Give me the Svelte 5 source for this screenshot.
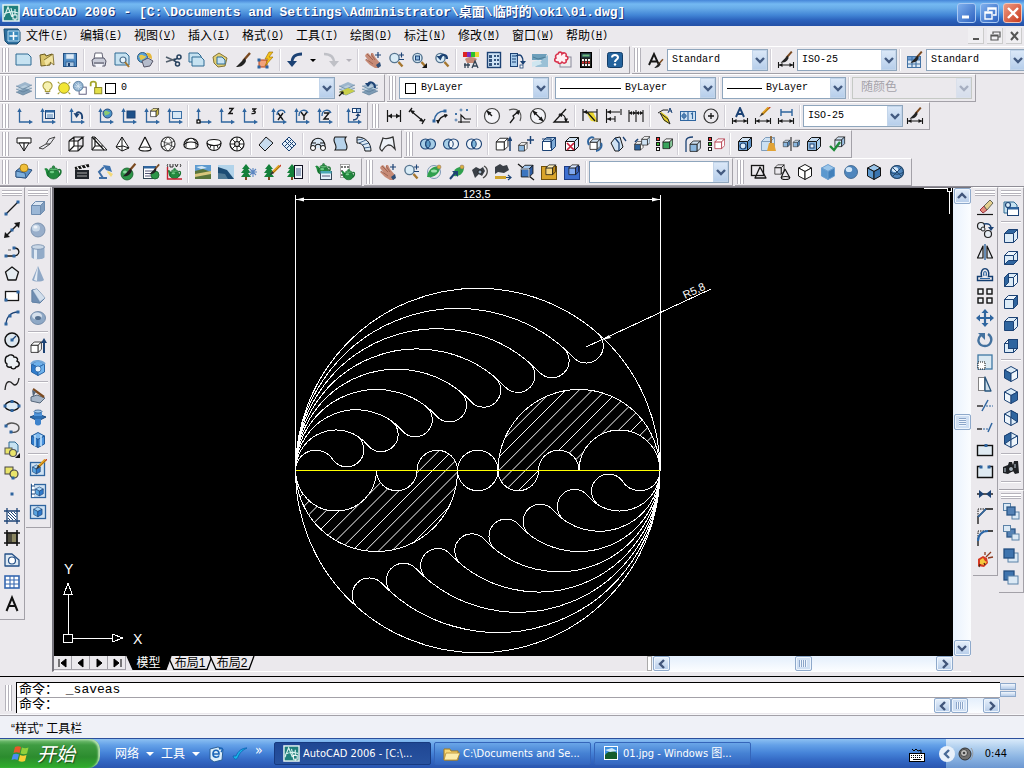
<script>
  const NAVY = '#1c4274', BLUE = '#2f659f', PALE = '#cfe2f3', INK = '#161616';
  const L = (d, s = INK, w = 1.2, f = 'none') => `<path d="${d}" fill="${f}" stroke="${s}" stroke-width="${w}"/>`;
  const F = (d, f = INK) => `<path d="${d}" fill="${f}"/>`;
  const P = (pts, f, s = INK, w = 1) => `<polygon points="${pts}" fill="${f}" stroke="${s}" stroke-width="${w}" stroke-linejoin="round"/>`;
  const C = (x, y, r, f = 'none', s = INK, w = 1.2) => `<circle cx="${x}" cy="${y}" r="${r}" fill="${f}" stroke="${s}" stroke-width="${w}"/>`;
  const E = (x, y, a, b, f = 'none', s = INK, w = 1.2) => `<ellipse cx="${x}" cy="${y}" rx="${a}" ry="${b}" fill="${f}" stroke="${s}" stroke-width="${w}"/>`;
  const R = (x, y, w, h, f = 'none', s = INK, sw = 1) => `<rect x="${x}" y="${y}" width="${w}" height="${h}" fill="${f}" stroke="${s}" stroke-width="${sw}"/>`;
  const dots = (...p) => p.map(([x, y]) => R(x - 1, y - 1, 2, 2, BLUE, BLUE)).join('');
  const mark = (inner, x, y, k) => `<g transform="translate(${x} ${y}) scale(${k})">${inner}</g>`;

  const cube = (f = PALE, t = PALE, s = PALE, k = INK) =>
    P('2.5,6.5 11.5,6.5 11.5,15.5 2.5,15.5', f, k) + P('2.5,6.5 6.5,2.5 15.5,2.5 11.5,6.5', t, k) + P('11.5,6.5 15.5,2.5 15.5,11.5 11.5,15.5', s, k);
  const hex = (t, l, r, k = INK) =>
    P('9,1.5 15.5,5 9,8.5 2.5,5', t, k) + P('2.5,5 9,8.5 9,16.5 2.5,13', l, k) + P('15.5,5 9,8.5 9,16.5 15.5,13', r, k);
  const sheet = (x = 2, y = 3, w = 13, h = 11) => P(`${x},${y} ${x + w - 3},${y} ${x + w},${y + 3} ${x + w},${y + h} ${x},${y + h}`, '#c6e2f1', '#2f6a93');
  const brush = L('M16 2 9 10', '#7b4a20', 2.4) + F('M11 7 2 16c4 0 8-1 10-6z', '#222');
  const pencil = L('M15 3 7 11', '#e0a020', 3) + L('M16 3 8 11', '#8c5207', .8) + F('M7 9 4 14l5-3z', '#333') + L('M15.5 2.5l1 1', '#c63b2a', 2.5);
  const bolt = F('M12 1 8 8h3l-3 7 8-9h-4l4-5z', '#f4c21b') + L('M12 1 8 8h3l-3 7 8-9h-4l4-5z', '#9b6a00', .6);
  const teapot = L('M14 7c4-2 4 5-1 6', '#1b7533', 1.6) + F('M5 14C1 13 3 7 0 6l2-1c3 1 3 4 5 4z', '#1f8a3c') + E(9.5, 11, 5.8, 5, '#23893f', '#105a26', .7) + E(9.5, 6.3, 4, 1.5, '#5cb873', '#14602a', .7) + C(9.5, 4, 1.2, '#2f9b4b', '#14602a', .6) + E(8, 9, 2.2, 1.3, '#6fcb85', 'none', 0);
  const axes = L('M4.5 3v12H16', BLUE, 1.3) + F('M2.3 5 4.5 1l2.2 4zM14 12.800l4 2.200-4 2.200z', BLUE);
  const lens = L('M11.5 11l4 4.5', '#a5762e', 2.4) + C(7.5, 7, 4.6, '#d9ecf7', '#55748f', 1.4);
  const hand = F('M2 3l2-1 3 3 0-3 2 0 2 4 5 6-1 5-4 0-5-3-5-5 1-1 3 2-4-5z', '#c68a76') + L('M3 3l6 6M7 3l4 6M2 8l7 5', '#8d5545', .7) + F('M12 14l4-3 1 4-3 2z', '#2f4f78');
  const cross = (x, y) => L(`M${x - 3} ${y}h6M${x} ${y - 3}v6`, NAVY, 1.2);
  const layers = F('M1 7l9-4 7 3-9 4z', '#9db6cc') + F('M1 10l9-4 7 3-9 4z', '#b8cddd') + F('M1 13l9-4 7 3-9 4z', '#7e9cb5') + L('M1 7l7 3 9-4M1 10l7 3 9-4M1 13l7 3 9-4', '#5b7b96', .7);
  const dim = L('M2.5 3v12M15.5 3v12M2 9h14', INK, 1.2) + F('M3 9l4-2.400v4.800zM15 9l-4-2.400v4.800z');
  const dimLow = L('M1.5 11v6M16.5 11v6M2 14h14', INK, 1.1) + F('M2 14l3.500-2v4zM16 14l-3.500-2v4z');
  const tree = F('M6 1l4 5H8l3 4H8l3 4H1l3-4H1l3-4H2z', '#14803a') + L('M6 14v3', '#7b4a20', 2);
  const rings = (a, b, m) => C(6.5, 9, 5, a, NAVY, 1.1) + C(11.5, 9, 5, b, NAVY, 1.1) + `<path d="M9 4.800a5 5 0 0 1 0 8.400a5 5 0 0 1 0-8.400" fill="${m}" stroke="${NAVY}"/>`;
  const ball = C(9, 9, 6.5, '#4f86bd', '#345d87', .8) + E(7, 6.5, 3.2, 2.6, '#d3e7f8', 'none', 0);
  const steel = '#8fa9c6';

  const icon = {
    new: sheet(1, 3, 15, 11),
    open: P('2,4 7,3 8,5 14,3 12,14 3,15', '#d9c36a', '#6a5a20') + F('M6 9l9-6 1 11-4-3-4 4z', '#f2e3a0') + L('M6 9l9-6 1 11-4-3', '#71601f', .8),
    save: R(2.5, 2.5, 13, 13, '#4f8bc4', '#234f80') + R(5, 3, 8, 5, '#dceaf6', '#7aa2c8', .6) + R(5, 11, 8, 4.5, '#a9c6e1', '#234f80', .7) + F('M7 12h2v3H7z', NAVY),
    print: P('5,2 12,2 13,8 4,8', '#fff', '#667') + P('2,9 5,7 14,7 16,10 15,15 3,15', '#c9ccd8', '#556') + L('M4 12h10', '#445', 1) + F('M5 13h8l-1 3H6z', '#f5f5fa'),
    preview: sheet(2, 2, 14, 12) + C(10, 9, 3, '#e8f4fb', '#4c6e8c', 1.2) + L('M12 11l4 5', '#a5762e', 2),
    publish: C(6.5, 6.5, 5, '#5aa2d8', '#2d5b80', 1) + F('M3 5c3-3 4 0 7 0-1 4-4 2-5 5z', '#e5c84a') + P('6,10 12,7 17,10 14,15 8,16', '#b5bccb', '#556') + F('M10 2c5-1 6 3 6 6l-3-1z', '#e5b83c'),
    cut: L('M1 6l9 4M1 11l9-3', '#53606e', 1.6) + C(14, 6, 2, 'none', '#26415e', 1.5) + C(12.5, 13, 2, 'none', '#26415e', 1.5) + L('M9 9l4-2M9 9.5l3 2', '#26415e', 1.5),
    copy: sheet(1, 2, 12, 9) + sheet(4, 6, 12, 9),
    paste: P('2,6 8,2 16,7 14,15 7,16 3,12', '#e2cf73', '#857436') + sheet(6, 6, 8, 7),
    brush,
    block: P('2,9 10,9 10,16 2,16', '#f2a27a', '#b3431c') + dots([2, 9], [10, 16], [2, 16]) + bolt,
    undo: L('M16 3C8 3 6 7 6 12', NAVY, 2.8) + F('M1 10h10l-5 6z', NAVY),
    redo: L('M2 3c8 0 10 4 10 9', '#bfc0c6', 2.4) + F('M7 10h10l-5 6z', '#bfc0c6'),
    pan: hand + cross(14, 4),
    zoom: lens + L('M12 4h5M14.5 1.500v5M12 8.500h5', NAVY, 1.1),
    zoomwin: lens + R(5.5, 5, 4, 4, '#8db8df', NAVY) + F('M17 12v5h-5z'),
    zoomprev: lens + L('M14 8C14 3 9 3 7 6', NAVY, 2.2) + F('M3.500 5l6 0-2 4.500z', NAVY),
    props: F('M1 1h4v5H1z', '#d22') + F('M5 1h4v5H5z', '#7a2fc0') + F('M9 1h4v5H9z', '#2ac22a') + F('M13 1h4v5h-4z', '#e9d531') + F('M3 8c4-3 9-2 12 0l-3 4H5z', '#c68a76') + L('M10 17l3-7 3 7M11 15h4M2 14h6M3 12v5M6 12v5', '#345', 1.3),
    design: R(2.5, 1.5, 13, 15, '#cfe3f5', NAVY, 1.4) + F('M4 4h3v3H4zM4 8h3v3H4zM4 12h3v3H4zM9 4h2v2H9zM12 4h2v2h-2zM9 8h2v2H9zM12 8h2v2h-2zM9 12h2v2H9zM12 12h2v2h-2z', '#34557e'),
    palette: R(2.5, 2.5, 7, 13, '#a9cdec', NAVY) + L('M4 5h4M4 8h4M4 11h4', NAVY) + L('M8 5c5-3 7 1 7 6', NAVY, 1.4) + F('M12 10h6l-3 4z', NAVY) + R(12, 14, 3, 3, '#fff', NAVY, .8),
    sheets: F('M1 3h15l-3 6H1z', '#6d9fbb') + F('M17 4v12H4l8-8z', '#9ac0d6') + F('M1 11l7-2 3 4-10 3z', '#cfe6f0') + L('M2 6l5 2 8-2', '#44758f', .8),
    markup: R(6, 6, 11, 10, '#eee', '#889') + L('M4 3c1-3 4-2 4 0 2-2 5-1 4 2 3 1 2 4 0 4 1 3-2 4-4 2-1 2-4 2-4 0-4 0-4-3-2-4-1-2 0-4 2-4z', '#d8324c', 1.6, '#fff0f2'),
    calc: R(3.500, 1.500, 11, 15, '#20231f', '#000') + R(5, 3, 8, 3, '#6fba7c', '#245') + F('M5 8h2v2H5zM8 8h2v2H8zM11 8h2v2h-2zM5 13h2v2H5zM8 13h2v2H8zM11 13h2v2h-2z', '#f2f2f2') + F('M5 10.500h2v2H5zM8 10.500h2v2H8zM11 10.500h2v2h-2z', '#d33'),
    help: `<rect x="1.500" y="1.500" width="15" height="15" rx="2" fill="#24639d" stroke="#143e68"/>` + L('M6 6.500C6 3 12 3 12 6.500c0 2-3 2-3 4.500', '#fff', 2) + C(9, 13.500, 1.200, '#fff', 'none', 0),
    textstyle: L('M2 14 7 3l5 11M4 10.500h6', INK, 1.900) + mark(brush, 6, 7, .62),
    dimstyle: dimLow + mark(brush, 2, -1, .8),
    tablestyle: R(1.500, 5.500, 13, 11, '#dbe8f5', '#4373a5') + F('M2 6h12v3H2z', '#6d9bd0') + L('M2 9h12M2 13h12M6 6v10M10 6v10', '#4373a5') + mark(brush, 3, -1, .8),
    layers,
    layercur: layers + F('M1 13l9-4 7 3-9 4z', '#c9cf4a') + L('M1 17l4-4', INK, 1.3) + F('M2 12.500h3.500V16z'),
    layerprev: layers + L('M14 9C14 3 9 2 7 5', NAVY, 2) + F('M4 4h6l-3 4z', NAVY),
    bulb: L('M6 11c-5-4-2-9 2.500-9s7.500 5 2.500 9v2H6z', '#a79a35', 1.200, '#f6f1b0') + L('M6.500 15h4', '#777', 1.600),
    sun: C(9, 9, 6, '#f2e634', '#8f8a1c', 1) + L('M2 2l2 2M16 2l-2 2M2 16l2-2M16 16l-2-2', '#a39d2b', 1.200),
    freeze: R(8, 8, 8, 8, '#fff', '#557') + C(7, 7, 5.500, '#8fb1cf', '#5b7e9f', 1) + L('M3 7h8M7 3v8M4 4l6 6M10 4l-6 6', '#dbe9f4', .9),
    lock: L('M3 7V4c0-3 6-3 6 0v6', '#a5a52c', 2) + R(7.500, 8.500, 8, 7, '#e3e04a', '#84801f'),
    ucs: axes,
    ucsface: axes + R(7.500, 3.500, 9, 8, '#e7f1fa', NAVY) + F('M7.500 3h9v2.500h-9z', BLUE) + L('M9 8h6M9 10h6', BLUE, .8),
    ucsprev: axes + L('M15 12C16 5 11 4 9 7', NAVY, 1.900) + F('M6.500 6l6 1-3 4z', NAVY),
    ucsworld: axes + C(11.500, 6.500, 4.500, '#4b93c7', NAVY, .9) + F('M8 5c2-3 4 0 6 0-1 4-4 2-5 4z', '#8dcb70'),
    ucsobj: axes + R(8, 4, 8, 7, '#1d5089', NAVY),
    ucsfc: axes + mark(cube('#fff', '#f0e48a', '#c9b846'), 7, 0, .62),
    ucsview: axes + R(7.500, 4.500, 9, 7, '#d6e7f5', '#3b6fa5'),
    ucsorigin: axes + R(3, 13, 3, 3, '#fff', '#000', 1.200),
    ucsz: axes + L('M12 1.500h4l-4 5h4', INK, 1.400),
    ucs3: axes + L('M12 2h3.500l-2 2c3 0 2 3.500-2 2.500', INK, 1.300),
    ucsx: axes + L('M9 6l5 7M14 6l-5 7', INK, 1.400) + L('M8 8c0-6 7-6 8-2', BLUE, 1.300),
    ucsy: axes + L('M9 5l3 4 3-4M12 9v4', INK, 1.400) + L('M7 9c0-7 7-7 9-3', BLUE, 1.300),
    ucszr: axes + L('M9 6h5l-5 6h5', INK, 1.400) + L('M7 9c0-7 7-7 9-3', BLUE, 1.300),
    ucsapply: axes + R(8.500, 1.500, 4, 4, '#fff', NAVY) + R(12.500, 1.500, 4, 4, '#9cc1e5', NAVY) + L('M9 13c3 0 5-1 5-5', NAVY, 1.400) + F('M11.500 9h5L14 6z', NAVY),
    dimlin: dim,
    dimalign: L('M4 1l-3 4M17 12l-3 5M3 4l12 10', INK, 1.300) + F('M2 3l5 1-2.500 3zM16 15l-5-1 2.500-3z'),
    dimarc: L('M3 14C4 7 8 4 14 4', BLUE, 1.500) + L('M7 16c1-5 4-7 9-8', INK, 1.300) + dots([3, 14], [14, 4]) + F('M17 8l-4-1 1 4zM7 17l-2-4 4 0z'),
    dimord: L('M7 16V8l4 4h6M4 15h12', INK, 1.200) + L('M1 6l2 2M3 6l-2 2M12 2l2 2M14 2l-2 2', BLUE, .9) + C(2, 13, 1, 'none', BLUE, .8) + C(7, 3, 1, 'none', BLUE, .8),
    dimrad: C(9, 9, 7.500, '#f4f4f8', '#444') + L('M4 4l5 5', INK, 1.400) + F('M3.500 3.500l5 2-3 3z'),
    dimjog: L('M3 3C12 0 17 6 14 14', '#555', 1.200) + L('M4 16l4-5-1-2 6-5', INK, 1.300) + F('M14 3l-1.500 5-3-3z'),
    dimdia: C(9, 9, 7.500, '#f4f4f8', '#444') + L('M4 4l10 10', INK, 1.200) + F('M3.500 3.500l5 2-3 3zM14.500 14.500l-5-2 3-3z'),
    dimang: L('M14 2 2 15h15', INK, 1.300) + L('M7 7c5 0 7 3 7 8', INK, 1.200) + F('M14 15.500l-2-4h4zM6 8l4-2v4z'),
    dimquick: F('M5 5l5 9 7 1-5-10z', '#e9d62d') + L('M2 2v12M16 2v13M2 5h14M6 5l8 9', INK, 1.200) + F('M2 5l4-2v4z'),
    dimbase: L('M2.500 2v14M2 5h14M2 12h9M11 9v6M17 2v6', INK, 1.100) + F('M3 5l4-2v4zM3 12l4-2v4z'),
    dimcont: L('M2 3v12M9 3v12M16 3v12M2 6h14', INK, 1.100) + F('M2 6l3-2v4zM9 6l-3-2v4zM9 6l3-2v4zM16 6l-3-2v4z'),
    qleader: F('M4 4l8 6 2 7-6-3z', '#e3cf2a') + L('M2 6l5-3h5M4 6l8 6 2 5-6-4z', '#222', 1) + L('M12 6l2-5 2 5M13 4h3', NAVY, 1),
    tolerance: R(1.500, 4.500, 15, 9, '#cfe2f3', '#2f659f') + L('M9 5v9', BLUE) + C(5, 9, 2, 'none', BLUE, 1) + L('M5 5.500v7M2.500 9h5M12 7l1.500-1v6', BLUE, 1.100),
    centermark: C(9, 9, 7, 'none', '#333', 1.200) + L('M9 6v6M6 9h6', INK, 1.300),
    dimedit: L('M5 10 9 1l4 9M6.500 7h5', NAVY, 1.900) + dimLow,
    dimtedit: dimLow + mark(pencil, 2, -2, .85),
    dimupdate: L('M4 2v7M15 2v7M4 5h11', BLUE, 1.400) + dimLow,
    solid2d: P('2,3 16,3 16,8 2,8', '#fff') + P('4,8 14,8 9,16', '#fff') + L('M9 8v8'),
    face3d: P('1,13 8,9 11,4 17,2 12,9 5,14', '#e8e8ee', '#444') + L('M8 9l4 0', '#444'),
    box: P('2,6 11,6 11,16 2,16', '#fff') + L('M2 6l5-4h9l-5 4M16 2v9l-5 5M7 2v9h9M7 11l-5 5'),
    wedge: P('2,2 5,2 17,15 2,15', '#fff') + L('M2 2l12 13M5 2v9l-3 4M5 11h8'),
    pyramid: P('9,2 16,13 9,16 3,12', '#fff') + L('M9 2v14M3 12l7-1 6 2', INK, 1),
    cone: F('M9 2 3 14h12z', '#fff') + L('M9 2 3 14M9 2l6 12') + E(9, 14, 6, 2, '#fff'),
    sphere: C(9, 9, 7, '#fff', '#333') + L('M9 2c-5 4-5 10 0 14M9 2c5 4 5 10 0 14M3 6c5 3 8 3 12 0M3 12l6-3 6 3', '#333', .9),
    dome: L('M2 10c0-9 14-9 14 0', INK, 1.200, '#fff') + E(9, 10.500, 7, 3.500, '#fff') + L('M7 4c-3 2-3 5-3 8M11 4c3 2 3 5 3 8', INK, .9),
    dish: L('M2 8c0 10 14 10 14 0', INK, 1.200, '#fff') + E(9, 7.500, 7, 3, '#fff') + L('M6 10l-1 3M12 10l1 3M9 11v5', INK, .9),
    torus: C(9, 9, 7, '#fff') + C(9, 9, 2.500, '#ddd') + L('M9 2v4M9 12v4M2 9h4M12 9h4M4 4l3 3M14 4l-3 3M4 14l3-3M14 14l-3-3', INK, .9),
    edge: P('2,10 9,2 16,8 8,16', '#c7dcef'),
    mesh: P('2,9 9,2 16,9 9,16', '#e4f0fa', NAVY) + L('M5 6l7 7M7 4l7 7M12 4l-7 7M14 6l-7 7', NAVY, 1),
    revolved: L('M2 13c-1-13 15-13 14 0M6 13c0-5 6-5 6 0M2 8h5M11 8h5', INK, 1.100, '#d9e7f4') + C(4, 13, 2.500, '#fff', INK, 1) + C(14, 13, 2.500, '#fff', INK, 1),
    tabulated: L('M3 2h11c-4 4 4 8 0 13H3c4-5-4-8 0-13z', INK, 1.100, '#b7d3eb'),
    ruled: L('M2 2c9 0 14 6 14 14l-6 0C9 11 7 8 2 8z', INK, 1, '#dceaf6') + L('M2 5l6-1M4 8l7-3M7 10l7-2M9 13l7-1', NAVY, .8),
    coons: L('M5 3c4 2 6 0 10-1 1 5 1 8 2 12-4-4-4-4-7-4-3 1-4 3-6 6-3-2-3-2 1-13z', '#333', 1.300, '#eef2f8'),
    union: rings('#a6cde6', '#a6cde6', '#5e9cc8'),
    subtract: rings('#a6cde6', '#eef3f8', '#f4f7fb'),
    intersect: rings('#eef3f8', '#eef3f8', '#7eb5d9'),
    extrude: mark(cube('#fff', '#fff', '#fff'), 0, 1, .9) + L('M16 16V4', NAVY, 1.500) + F('M13.500 6 16 1l2.500 5z', NAVY),
    movef: mark(cube('#8bb7df', '#fff', '#fff'), 0, 6, .65) + L('M10 5h7M13.500 1v8', NAVY, 1.400),
    offsetf: cube('#fff', '#b9d4ed', '#7fabd6', NAVY) + L('M2 4h9v9', NAVY, 1.200),
    deletef: cube('#fff', PALE, PALE) + L('M4 8l7 7M11 8l-7 7', '#c8203c', 1.700),
    rotatef: mark(cube('#fff', PALE, PALE), 2, 2, .8) + L('M3 10C0 4 5 1 8 3M15 8c2 4-2 8-5 8', BLUE, 1.900),
    taperf: P('2,8 6,3 11,2 14,12 10,16 6,16', '#cfe2f3') + L('M6 3l4 5v8M14 2l3 4', NAVY, 1.300),
    colorf: mark(cube(BLUE, '#fff', '#fff'), 1, 5, .65) + mark(cube(PALE, '#fff', PALE), 8, 0, .65) + L('M6 4l-3 3', NAVY, 1.600),
    copyf: R(1.500, 2.500, 3, 3, '#e33') + R(1.500, 7.500, 3, 3, '#3b3') + R(1.500, 12.500, 3, 3, '#fff') + mark(cube('#3aa35c', '#fff', '#89c99b'), 6, 2, .75),
    copyedge: mark(cube('#8bb7df', PALE, PALE), 4, 4, .8) + L('M2 17V6C2 3 5 2 9 2', NAVY, 1.300),
    coloredge: R(1.500, 2.500, 3, 3, '#e33') + R(1.500, 7.500, 3, 3, '#3b3') + R(1.500, 12.500, 3, 3, '#fff') + mark(cube('#fff', '#fff', '#fff', '#b03040'), 6, 2, .75),
    imprint: cube('#6fa5d8', PALE, '#5b90c4') + C(7, 11, 3, '#d9ebfa', NAVY),
    clean: cube('#cbe0f1', PALE, PALE, '#7f9dbb') + L('M12 1v8', '#8a5a20', 1.600) + F('M10 8h5l2 8H8z', '#e2a335'),
    separate: mark(cube('#8bb7df', PALE, '#5b93c9'), 0, 4, .5) + mark(cube('#8bb7df', PALE, '#5b93c9'), 10, 4, .5) + L('M9 2v14', INK, 1),
    shell: cube('#8bb7df', '#c3dbf1', '#a9cdec') + R(5, 9, 4, 4, '#e8f2fb', NAVY),
    check: mark(cube('#d7e7f5', PALE, '#9cc1e5'), 5, 0, .75) + L('M2 11l4 4 6-8', '#1f8a3a', 2.400),
    hide: P('1,8 6,4 17,7 11,15 1,14', '#5e93c9', '#274c78') + C(9, 5, 4, '#f0bf3a', '#9c7513', .8) + P('1,8 10,10 11,15 1,14', '#7fb0dc', '#274c78', .8),
    teapot,
    scene: F('M2 7h14v9H2z', '#20242a') + L('M2 5.500l14-3', '#111', 3) + L('M4 3.500l2 3M8 3l2 3M12 2l2 3', '#fff', 1.300) + L('M4 10h10M4 13h10', '#aaa', 1),
    light: L('M3 15h8M7 15l-4-6 5-5', '#3f6ea5', 2) + F('M7 2l7 1 2 6-6-2z', '#3e72ae') + F('M12 8l5 3-2 3-4-5z', '#f3d978'),
    material: C(8, 11, 6, '#2d9548', '#155e2a', .8) + E(6, 9, 2, 1.500, '#8fd8a0', 'none', 0) + mark(brush, 2, -1, .9),
    matlib: R(1.500, 3.500, 12, 12, '#fff', '#345') + F('M1.500 3h12v2.500h-12z', BLUE) + L('M3 8h9M3 10.500h7M3 13h6', '#557', 1) + C(13, 12, 4, '#2d9548', '#155e2a', .8) + mark(brush, 6, 0, .7),
    mapping: mark(teapot, 2, 3, .8) + L('M2.500 4v12H17', '#c5202e', 1.400) + L('M3 1c-1 1-1 2 0 3M5 1v3h3V1M10 1l1.500 3L13 1M15 1c1 1 1 2 0 3', INK, .9),
    background: F('M1 2h16v14H1z', '#5e9bd0') + F('M1 8l8-2 8 3v7H1z', '#58743a') + F('M1 11l16-3v3L1 14z', '#d8c67c') + F('M2 4l6-1 5 2-6 1z', '#d6e9f6'),
    fog: F('M1 2h16v14H1z', '#b2d3ea') + F('M1 4l9 3 7 9H1z', '#1c4c74') + F('M1 10l7 1 3 5H1z', '#4f7a96'),
    landnew: tree + L('M13 5v9M9 9h8M10 6l6 6M16 6l-6 6', '#5c87c2', 1.100),
    landedit: tree + mark(pencil, 3, 0, .9),
    landlib: tree + R(8.500, 2.500, 8, 13, '#f1f5fb', '#112') + L('M10 6h5M10 8h5M10 10h5M10 12h5', '#33507f', .9),
    renderpref: mark(teapot, 0, -2, .9) + R(5.500, 8.500, 11, 8, '#e4f0fa', '#345') + F('M5.500 8h11v2.500h-11z', '#49a7b5') + L('M7 13h8', '#557', 1),
    stats: R(2.500, 1.500, 9, 13, '#fff', '#777', .6) + L('M4 3v2M7 3v2M10 3v2M4 7v2M4 11v2', '#333', 1.300) + mark(teapot, 3, 4, .8),
    orbit3d: C(9, 9, 6.500, 'none', '#7b97b5', 1) + F('M2 14C3 7 8 2 15 4c0 6-5 11-13 10z', '#2fa04e') + E(9, 8, 3, 1.500, '#9fe0ad', 'none', 0) + C(14, 4, 2, '#d9b23e', '#866', .5),
    orbitc: F('M5 13c0-6 4-10 11-9 0 6-4 10-11 9z', '#2fa04e') + L('M2 16l5-6', NAVY, 2) + F('M4 8h6v6z', NAVY) + C(14, 4, 2, '#d9b23e', '#866', .5),
    swivel: F('M1 7l4-3 4 2 3-2 2 4-3 5-3-2-4 4z', '#3a3f46') + C(9, 9, 2, '#9fb3c6', '#111', .8) + L('M13 3c5 3 4 9-1 12', '#444', 1.300),
    distance: F('M1 4l5-3 3 2 4-1 2 5-5 3-6-1-3 2z', '#3a3f46') + L('M1 14.500h11', '#d1a52d', 3) + L('M12 14.500h5M14 12l3 2.500-3 2.500', NAVY, 1.200),
    clip: mark(cube('#3c76c0', '#a5c9f0', '#2c5ba3'), 2, 0, .9) + L('M1 1l5 4M12 13l5 4', INK, 1.300) + L('M4 6h8v8', '#dce9fa', 1),
    clipf: R(1.500, 3.500, 15, 13, '#d9a42a', '#70510c') + mark(cube('#f4d681', '#fff1bf', '#c08a17'), 4, 0, .75),
    clipb: R(1.500, 3.500, 15, 13, '#3d6fd0', '#1d3c85') + mark(cube('#7fa8f0', '#d8e6ff', '#3c63bb'), 4, 0, .75),
    wire2d: R(1.500, 2.500, 12, 10, 'none', INK, 1.300) + P('10,4 16,15 5,15', 'none', INK, 1.300),
    wire3d: mark(cube('none', 'none', 'none'), 0, 0, .72) + L('M12 6l5 9M12 6l-4 9') + E(12.500, 15, 4, 1.500),
    hidden: hex('#fff', '#fff', '#fff'),
    flat: hex('#9bc6ea', '#5b98cf', '#4280bb', '#6b9fd0'),
    gouraud: ball,
    flatedge: hex('#9bc6ea', '#5b98cf', '#3a74ae', '#111'),
    gouraudedge: ball + L('M4 4l10 10M14 4L4 14M2.500 9c4 3 9 3 13 0', '#24496e', 1) + C(9, 9, 6.500, 'none', '#24496e'),
    line: L('M3 15 15 3', INK, 1.300) + dots([3, 15], [15, 3]),
    xline: L('M3 15 15 3', INK, 1.500) + F('M1 17l1-6 5 5zM17 1l-1 6-5-5z') + dots([9, 9]),
    pline: L('M3 13h8c7-1 6-8 0-8', INK, 1.300) + dots([3, 13], [11, 13], [11, 5]) + L('M5 7h3', '#777'),
    polygon: P('9,2 15.500,7 13,15 5,15 2.500,7', '#e6edf2', INK, 1.300),
    rect: R(2.500, 4.500, 13, 9, '#fff', INK, 1.300) + dots([3, 13], [15, 5]),
    arc: L('M3 16C3 8 8 3 15 3', NAVY, 1.300) + dots([3, 15], [7, 7], [15, 3]),
    circle: C(9, 9, 7, '#dfe8ef', '#111', 1.500) + L('M9 9l4-4', NAVY) + dots([9, 9]),
    revcloud: L('M5 3c2-2 6-1 6 1 4 0 4 3 3 4 4 2 2 6-1 6-1 3-5 2-5 0-3 1-5-1-4-3-3-2-2-8 1-8z', '#111', 1.400, '#edf1f5'),
    spline: L('M2 15c1-12 6-8 8-6s5 1 6-6', '#222', 1.300),
    ellipse: E(9, 9, 7, 4.500, '#dcebf6', '#111', 1.400) + dots([2, 9], [16, 9], [9, 4.500], [9, 13.500]),
    ellarc: L('M3 7c3-5 13-3 13 2 0 4-5 5-8 4', '#555', 1.400) + dots([3, 7], [8, 13]),
    insert: sheet(6, 1, 9, 10) + R(2, 7, 7, 6, '#e9e46a', '#555') + C(10, 12, 3.500, '#e9e46a', '#555') + F('M17 12v5h-5z'),
    makeblock: R(2, 4, 8, 7, '#e9e46a', '#444') + C(11, 11, 4, '#e9e46a', '#444') + dots([10, 15]),
    point: dots([9, 9]),
    hatch: R(4, 4, 10, 10, '#fff', 'none', 0) + L('M4 1v16M14 1v16M1 4h16M1 14h16', NAVY, 1.300) + L('M5 5l8 8M5 8l5 5M5 11l2 2M8 5l5 5M11 5l2 2', NAVY, 1),
    gradient: R(4, 4, 10, 10, '#8a8560', INK) + F('M4 4h5v10H4z', '#4c4a3c') + L('M4 1v16M14 1v16M1 4h16M1 14h16', INK, 1.600),
    region: P('2,3 9,3 16,9 16,15 2,15', '#dfeaf4', '#234f86', 1.300) + C(9, 9.500, 3.500, '#fff', '#234f86'),
    table: R(2, 3, 14, 12, '#fff', '#3567b0', 1.600) + L('M2 7h14M2 11h14M7 3v12M11 3v12', '#3567b0', 1.100),
    mtext: L('M3.500 16 9 2.500 14.500 16M5.500 11h7', '#111', 2),
    sbox: cube('#9bb7d6', '#dbe6f2', '#7f9dbe', '#6f8db0'),
    ssphere: C(9, 9, 7, '#98aeca', '#7088a6', .8) + E(7, 7, 4, 3.500, '#c9d8e8', 'none', 0) + E(6.500, 6, 2, 1.500, '#eef3f9', 'none', 0),
    scyl: F('M2.500 4v10c0 3 13 3 13 0V4z', '#92abc8') + F('M5 5h3v11H5z', '#dfe9f4') + E(9, 4, 6.500, 2.300, '#c9d7e6', '#6f89a8', .8),
    scone: F('M9 1 3 15c2 2 10 2 12 0z', '#8fa8c6') + F('M9 1 5 15l3 1z', '#e3ebf4'),
    swedge: P('3,3 8,2 16,11 11,16 3,15', '#9fb6d1', '#5f7fa3') + P('3,3 11,16 3,15', '#6f8eb2', '#5f7fa3', .6) + F('M4 3l4-1 8 9-5 3z', '#d3dfec'),
    storus: E(9, 9, 7.500, 6.500, steel, '#647f9f', .8) + E(8, 7, 5, 3.500, '#d5e0ec', 'none', 0) + E(9, 9, 3, 2, '#55708f', 'none', 0),
    sextrude: mark(cube('#fff', '#fff', '#fff'), 0, 3, .8) + L('M15 16V4', NAVY, 2) + F('M12 6l3-5 3 5z', NAVY),
    srevolve: hex('#6db1ec', '#2f7ccc', '#6db1ec', '#2a66a7') + L('M2 5c3-4 10-4 14 0', '#73a7d8', 2) + C(9, 10, 3, '#e6f2fc', '#2a66a7', .8),
    slice: P('2,10 8,8 16,11 11,16 2,14', '#a6b5c7', '#56677b') + L('M4 2l11 8', '#7b4a20', 2.200) + F('M3 3l4 2-3 5z', '#56677b'),
    section: P('1,8 9,5 17,8 9,12', '#2d6fb3', '#1c4b80') + F('M5 2h8v5H5z', '#4f93d8') + F('M6 10h6v5c-2 2-4 2-6 0z', '#3e83cc') + E(9, 2.500, 4, 1.500, '#a5cdf0', '#1c4b80', .7),
    interfere: hex('#7db9ef', '#2e79ca', '#4a93de', '#235c9c') + L('M6 4v11M12 4v11', '#bfe0fb', 1.600),
    setdraw: R(1.500, 3.500, 14, 13, '#cfe2f3', BLUE, 1.300) + mark(hex('#a8d4f5', '#5aa5e0', '#2e79ca', NAVY), 2, 5, .6) + mark(pencil, 3, -2, .9),
    setview: R(2.500, 3.500, 14, 13, '#cfe2f3', BLUE, 1.300) + mark(hex('#a8d4f5', '#5aa5e0', '#2e79ca', NAVY), 5, 5, .6) + L('M4 2v14', '#fff', 2) + L('M2 5h4M2 9h4M2 13h4', NAVY, 1),
    setprof: R(1.500, 2.500, 15, 13, '#cfe2f3', BLUE, 1.300) + mark(hex('#a8d4f5', '#5aa5e0', '#2e79ca', NAVY), 3, 3, .65),
    erase: P('4,11 8,7 11,11 7,14', '#e48b7a', '#934') + P('8,7 14,1 17,4 11,11', '#e3cf8e', '#665') + L('M1 15.500h16', INK, 1.200),
    copyo: C(5, 5, 3.500, '#e8eef4', '#222') + C(12, 13, 3.500, '#e8eef4', '#222') + C(7, 8, 2, '#e8eef4', '#222', 1) + L('M8 3c5-1 7 1 7 4', NAVY, 1.500) + F('M12 6h6l-3 4z', NAVY),
    mirror: P('7,3 7,15 1.500,15', '#e3e9f0', '#111', 1.200) + P('11,3 11,15 16.500,15', '#e3e9f0', '#111', 1.200) + L('M9 1v16', BLUE, 1.400),
    offset: L('M1.500 15.500h15v-4h-4C15 1 3 1 5.500 11.500h-4z', '#123d70', 1.400) + L('M4 13.500h10M8 11c-2-6 4-6 2 0', BLUE, 1.200),
    array: R(2, 2, 5, 5, '#eef2f6', '#111', 1.400) + R(11, 2, 5, 5, '#eef2f6', '#111', 1.400) + R(2, 11, 5, 5, '#eef2f6', '#111', 1.400) + R(11, 11, 5, 5, '#eef2f6', '#111', 1.400),
    move: L('M9 3v12M3 9h12', BLUE, 2.200) + F('M9 0l3.500 4h-7zM9 18l3.500-4h-7zM0 9l4-3.500v7zM18 9l-4-3.500v7z', BLUE),
    rotate: L('M5 4c-5 5-2 11 4 11s9-8 3-12', '#44729f', 2.400) + F('M2 2h7v7z', '#44729f'),
    scale: R(2, 2, 14, 14, '#dbe9f2', '#3f78a3', 1.300) + `<rect x="2" y="9" width="7" height="7" fill="#fff" stroke="#111" stroke-dasharray="1 1"/>`,
    stretch: `<rect x="2.500" y="2.500" width="6" height="13" fill="#fff" stroke="#111" stroke-dasharray="1 1"/>` + P('9,2 15,16 9,16', '#cfdfeb', '#26547c', 1.300),
    trim: L('M6 14l6-11', BLUE, 1.500) + L('M1 9h6', INK, 1.300) + `<path d="M10 9h7" stroke="#2f659f" stroke-dasharray="2 1"/>`,
    extend: L('M12 13l4-9', BLUE, 1.500) + L('M1 10h5', INK, 1.300) + `<path d="M7 10h6" stroke="#2f659f" stroke-dasharray="2 1"/>`,
    breakpt: R(1.500, 4.500, 15, 10, '#dfeaf2', '#111', 1.400) + dots([10, 4.500]),
    breako: L('M5 3.500H1.500v11h15v-11H13', '#111', 1.400, '#dfeaf2') + dots([5, 4], [13, 4]),
    join: L('M1 9h16', INK, 1.400) + F('M3 5l5 4-5 4zM15 5l-5 4 5 4z', NAVY),
    chamfer: `<path d="M2 10V2h8" fill="none" stroke="#111" stroke-dasharray="1.500 1"/>` + L('M2 17v-7l8-8h7', '#111', 1.300) + L('M2 10l8-8', BLUE, 1.700),
    fillet: `<path d="M2 10V2h8" fill="none" stroke="#111" stroke-dasharray="1.500 1"/>` + L('M2 17v-5M12 2h5', '#111', 1.300) + L('M2 12C2 6 6 2 12 2', '#2a66a7', 2),
    explode: F('M2 8l5-3 4 2 1 5-4 4-6-1z', '#d63a22') + F('M4 9l3-2 2 3 2 1-3 3-4-1z', '#f5c83c') + L('M10 6l5-5M12 7l5-1M9 4V1', '#8d3c20', 1.300) + L('M3 16l1-3M8 12l1 2', '#521', 1.300),
    viewnamed: sheet(2, 3, 13, 11) + R(5.500, 8.500, 11, 8, '#fff', NAVY) + F('M5.500 8h11v2.500h-11z', BLUE) + C(6, 6, 2.500, '#d9ecf7', NAVY),
    vtop: cube('#dcebf7', BLUE, '#dcebf7', NAVY),
    vbottom: cube('#dcebf7', '#eef5fb', '#dcebf7', NAVY) + P('2.500,15.500 6.500,11.500 15.500,11.500 11.500,15.500', BLUE, NAVY),
    vleft: cube('#dcebf7', '#dcebf7', '#eef5fb', NAVY) + P('2.500,6.500 6.500,2.500 6.500,11.500 2.500,15.500', BLUE, NAVY),
    vright: cube('#dcebf7', '#eef5fb', BLUE, NAVY),
    vfront: cube(BLUE, '#dcebf7', '#dcebf7', NAVY),
    vback: cube('#dcebf7', '#eef5fb', '#dcebf7', NAVY) + R(6.500, 2.500, 9, 9, BLUE, NAVY),
    isosw: hex('#dcebf7', BLUE, '#eef5fb', NAVY),
    isose: hex('#dcebf7', '#eef5fb', BLUE, NAVY),
    isone: hex('#dcebf7', '#eef5fb', '#dcebf7', NAVY) + P('9,1.500 15.500,5 15.500,13 9,8.500', BLUE, NAVY),
    isonw: hex('#dcebf7', '#dcebf7', '#eef5fb', NAVY) + P('9,1.500 2.500,5 2.500,13 9,8.500', BLUE, NAVY),
    camera: F('M1 8l5-2 1-3h3l1 3 1-4h4l1 12-4 1-2-3-5 3-5-1z', '#1f2225') + C(9, 10, 2.500, '#a5b0b9', '#111', 1) + L('M3 9v4M13 5v4', '#9ba6af', 1.300),
    front: R(1.500, 1.500, 7, 7, '#dbe9f5', '#5b82a7') + R(10, 10, 7, 7, '#dbe9f5', '#5b82a7') + R(5, 5, 8, 8, '#5582b5', '#2c5787', 1.300),
    back: R(5, 5, 8, 8, '#5582b5', '#2c5787', 1.300) + R(1.500, 1.500, 7, 6, '#dbe9f5', '#5b82a7') + R(10, 10, 7, 6, '#dbe9f5', '#5b82a7'),
    above: R(6, 7, 10, 9, '#dbe9f5', '#5b82a7') + R(2, 3, 10, 9, '#3f74ae', '#244f80', 1.300),
    under: R(2, 3, 10, 9, '#3f74ae', '#244f80', 1.300) + R(6, 8, 10, 8, '#dbe9f5', '#5b82a7'),
  };

  const combo = (label, value, width, extra = {}) => ({ label, value, width, ...extra });
  const bar = (...parts) => parts.flatMap((p) => (typeof p === 'string' ? p.split(' ') : [p]));
  const rows = [
    [
      bar('new open save | print preview publish | cut copy paste brush block | undo v redo w | pan zoom zoomwin zoomprev | props design palette sheets markup calc | help'),
      bar('textstyle', combo('文字样式', 'Standard', 101), '| dimstyle', combo('标注样式', 'ISO-25', 100), '| tablestyle', combo('表格样式', 'Standard', 100)),
    ],
    [
      bar('layers', combo('图层', '0', 300, { lead: 'layer' }), 'layercur layerprev'),
      bar(combo('颜色', 'ByLayer', 150, { lead: 'square' }), '|', combo('线型', 'ByLayer', 161, { lead: 'rule', rule: 61 }), '|', combo('线宽', 'ByLayer', 124, { lead: 'rule', rule: 35 }), '|', combo('打印样式', '随颜色', 120, { off: true })),
    ],
    [
      bar('ucs ucsface | ucsprev | ucsworld ucsobj ucsfc ucsview | ucsorigin ucsz ucs3 | ucsx ucsy ucszr | ucsapply'),
      bar('dimlin dimalign dimarc dimord | dimrad dimjog dimdia dimang | dimquick dimbase dimcont | qleader tolerance centermark | dimedit dimtedit dimupdate |', combo('当前标注样式', 'ISO-25', 100), 'dimstyle'),
    ],
    [
      bar('solid2d face3d | box wedge pyramid cone sphere dome dish torus | edge mesh | revolved tabulated ruled coons'),
      bar('union subtract intersect | extrude movef offsetf deletef rotatef taperf colorf copyf | copyedge coloredge | imprint clean separate shell check'),
    ],
    [
      bar('hide | teapot | scene light material matlib mapping | background fog landnew landedit landlib | renderpref stats'),
      bar('pan zoom orbit3d orbitc swivel distance clip clipf clipb |', combo('视图', '', 140)),
      bar('wire2d wire3d hidden flat gouraud flatedge gouraudedge'),
    ],
  ];
  const docks = {
    left: [
      [bar('line xline pline polygon rect arc circle revcloud spline ellipse ellarc insert makeblock point hatch gradient region table mtext')],
      [bar('sbox ssphere scyl scone swedge storus | sextrude srevolve | slice section interfere | setdraw setview setprof')],
    ],
    right: [
      [bar('erase copyo mirror offset array move rotate scale stretch trim extend breakpt breako join chamfer fillet explode')],
      [bar('viewnamed | vtop vbottom vleft vright vfront vback | isosw isose isone isonw | camera |'), bar('front back above under')],
    ],
  };
  const menus = [['文件', 'F'], ['编辑', 'E'], ['视图', 'V'], ['插入', 'I'], ['格式', 'O'], ['工具', 'T'], ['绘图', 'D'], ['标注', 'N'], ['修改', 'M'], ['窗口', 'W'], ['帮助', 'H']];

  // Drawing geometry: nine tangent circles share the left end of the diameter.
  const X0 = 295.5, Y0 = 470.5, U = 20.25, RL = 17.1;
  const mid = X0 + 9 * U;
  const lobes = [];
  for (let k = 2; k <= 9; k++) {
    const c1 = X0 + U * k, c0 = c1 - U, R1 = U * k, R0 = R1 - U;
    const a = R1 - RL, b = R0 + RL;
    const u = (b * b - a * a - U * U) / (2 * U), v = Math.sqrt(a * a - u * u);
    const t1 = [c1 + (u * R1) / a, Y0 - (v * R1) / a];
    const t0 = [c0 + ((u + U) * R0) / b, Y0 - (v * R0) / b];
    lobes.push(`M${t1} A${RL} ${RL} 0 1 1 ${t0}`, `M${X0} ${Y0} A${R0} ${R0} 0 0 1 ${t0}`);
  }
  const fins = lobes.join(' ');
  const xr = (n) => X0 + 2 * U * n;
  const eye = `M${xr(5)} ${Y0} A81 81 0 0 1 ${xr(9)} ${Y0} A40.5 40.5 0 0 0 ${xr(7)} ${Y0} A20.25 20.25 0 0 0 ${xr(6)} ${Y0} A20.25 20.25 0 0 1 ${xr(5)} ${Y0}`;
  const hatches = Array.from({ length: 32 }, (_, i) => 744 + i * 13.25).map((c) => `M${c - 560} 560L${c - 380} 380`).join(' ');
  const chevrons = { up: 'M4 10l4-4 4 4', down: 'M4 6l4 4 4-4', left: 'M10 4L6 8l4 4', right: 'M6 4l4 4-4 4' };
  let command = $state('');
</script>

{#snippet glyph(name, size = 18)}
  <svg width={size} height={size} viewBox="0 0 18 18" aria-hidden="true">{@html icon[name]}</svg>
{/snippet}

{#snippet chevron(dir)}
  <svg width="16" height="16" viewBox="0 0 16 16" aria-hidden="true"><path d={chevrons[dir]} fill="none" stroke="currentColor" stroke-width="2.4" /></svg>
{/snippet}

{#snippet toolbar(items, vertical = false)}
  <div class="toolbar" class:vertical role="toolbar">
    <span class="grip"></span>
    {#each items as it}
      {#if it === '|'}
        <span class="sep"></span>
      {:else if it === 'v' || it === 'w'}
        <button class="drop" class:faded={it === 'w'} aria-label={it === 'v' ? '放弃列表' : '重做列表'}><i></i></button>
      {:else if typeof it === 'string'}
        <button class="tool" aria-label={it}>{@render glyph(it)}</button>
      {:else}
        <div class="combo" class:off={it.off} style="width:{it.width}px">
          {#if it.lead === 'layer'}
            <span class="lead">{@render glyph('bulb', 16)}{@render glyph('sun', 16)}{@render glyph('freeze', 16)}{@render glyph('lock', 16)}<b class="square"></b></span>
          {:else if it.lead === 'square'}
            <span class="lead"><b class="square"></b></span>
          {:else if it.lead === 'rule'}
            <span class="lead"><b class="rule" style="width:{it.rule}px"></b></span>
          {/if}
          <select aria-label={it.label} disabled={it.off}><option>{it.value}</option></select>
          <span class="arrow">{@render chevron('down')}</span>
        </div>
      {/if}
    {/each}
  </div>
{/snippet}

{#snippet cadlogo(size)}
  <svg width={size} height={size} viewBox="0 0 18 18" aria-hidden="true">
    <rect x="1" y="1" width="16" height="16" fill="#1f7f7c" stroke="#eaf6f4" stroke-width="1.5" />
    <path d="M2 13 6 3l4 10M9 4c1 5 2 7 2 9M2 10c6-3 9-3 14-1M13 5v12" fill="none" stroke="#d9f2ee" stroke-width="1.2" />
    <rect x="11" y="11" width="4" height="4" fill="#1f7f7c" stroke="#fff" />
  </svg>
{/snippet}

<div class="app">
  <header class="title">
    {@render cadlogo(18)}
    <h1>AutoCAD 2006 - [C:\Documents and Settings\Administrator\桌面\临时的\ok1\01.dwg]</h1>
    <div class="winbtns">
      <button aria-label="最小化"><svg width="18" height="18"><path d="M4 13h7" stroke="#fff" stroke-width="3" /></svg></button>
      <button aria-label="还原"><svg width="18" height="18"><path d="M7 7V4h8v7h-3M7 5h8M4 8h7v7H4zM4 9h7" fill="none" stroke="#fff" stroke-width="1.4" /></svg></button>
      <button class="close" aria-label="关闭"><svg width="18" height="18"><path d="M4 4l10 10M14 4L4 14" stroke="#fff" stroke-width="2.4" /></svg></button>
    </div>
  </header>

  <nav class="menu">
    <svg class="doc" width="18" height="18" viewBox="0 0 18 18" aria-hidden="true"><path d="M1 2h14l2 3v9l-3 3H5l-3-3z" fill="#2d6f9e" stroke="#174a70" /><path d="M5 4h11v10H5z" fill="#3b8abd" stroke="#b7daef" /><path d="M10.5 5v8M6.5 9h8" stroke="#fff" stroke-width="1.5" /></svg>
    {#each menus as [name, key]}
      <button>{name}<span>(<u>{key}</u>)</span></button>
    {/each}
    <div class="docbtns">
      <button aria-label="最小化文档"><svg width="14" height="14"><path d="M4 10h6" stroke="#555" stroke-width="2" /></svg></button>
      <button aria-label="还原文档"><svg width="14" height="14"><path d="M5 5V3h7v5h-2M3 6h7v5H3zM3 7h7" fill="none" stroke="#555" stroke-width="1.2" /></svg></button>
      <button aria-label="关闭文档"><svg width="14" height="14"><path d="M4 3l7 8M11 3l-7 8" stroke="#555" stroke-width="2" /></svg></button>
    </div>
  </nav>

  <div class="bars">
    {#each rows as row}
      <div class="row">{#each row as items}{@render toolbar(items)}{/each}</div>
    {/each}
  </div>

  <main>
    {#each docks.left as col}
      <div class="dock">{#each col as items}{@render toolbar(items, true)}{/each}</div>
    {/each}

    <section class="view">
      <svg class="canvas" viewBox="54 188 899 468" role="img" aria-label="01.dwg">
        <defs>
          <clipPath id="eyes">
            <path d={eye} />
            <path d={eye} transform="rotate(180 {mid} {Y0})" />
          </clipPath>
          <g id="half">
            <path d={fins} />
            <path d={eye} />
          </g>
        </defs>
        <path d={hatches} clip-path="url(#eyes)" stroke="#fff" />
        <g fill="none" stroke="#fff" shape-rendering="crispEdges">
          <circle cx={mid} cy={Y0} r={9 * U} />
          <circle cx={mid} cy={Y0} r={U} />
          <use href="#half" />
          <use href="#half" transform="rotate(180 {mid} {Y0})" />
          <path d="M295.5 195V470.5M660.5 195V470.5M296 199.5H660M586 347 711 289" />
          <path d="M68.5 634V594M64 594h8l-4-11zM72 638.5H112M112 634v8l11-4zM63.5 634.5h9v8h-9z" />
          <path d="M924 188.5H947M947.5 188v3h4v-3M949.5 191V214" />
        </g>
        <rect x="296" y="470" width="364" height="1" fill="#ffff00" shape-rendering="crispEdges" />
        <path d="M296 199.5l8-2v4zM660 199.5l-8-2v4zM602 340l7-5 2 3z" fill="#fff" />
        <g fill="#fff" class="labels">
          <text x="463" y="198">123,5</text>
          <text transform="translate(685 299) rotate(-25)">R5,8</text>
          <text class="axis" x="64" y="574">Y</text>
          <text class="axis" x="133" y="644">X</text>
        </g>
      </svg>
      <div class="scroll vert">
        <button aria-label="向上滚动">{@render chevron('up')}</button>
        <span class="thumb"></span>
        <button aria-label="向下滚动">{@render chevron('down')}</button>
      </div>
      <div class="foot">
        <div class="navs">
          {#each [['首页', 'M5 3v8M12 3v8L7 7z'], ['上一页', 'M11 3v8L6 7z'], ['下一页', 'M7 3v8l5-4z'], ['末页', 'M13 3v8M6 3v8l5-4z']] as [label, d]}
            <button aria-label={label}><svg width="17" height="14"><path {d} stroke="#000" /></svg></button>
          {/each}
        </div>
        <div class="tabs">
          {#each ['模型', '布局1', '布局2'] as tab, i}
            <button class:active={i === 0}>
              <svg width="46" height="14" viewBox="0 0 46 14" aria-hidden="true"><path d={i === 0 ? 'M1 0l6 13.5h33L45 0' : 'M1 0l6 13.5h33L45 0'} fill={i === 0 ? '#000' : '#ebe9ed'} stroke="#000" stroke-width="1.3" /></svg>
              <span>{tab}</span>
            </button>
          {/each}
        </div>
        <div class="scroll horiz">
          <span class="split"></span>
          <button aria-label="向左滚动">{@render chevron('left')}</button>
          <span class="thumb"></span>
          <button aria-label="向右滚动">{@render chevron('right')}</button>
        </div>
      </div>
    </section>

    {#each docks.right as col}
      <div class="dock">{#each col as items}{@render toolbar(items, true)}{/each}</div>
    {/each}
  </main>

  <section class="command">
    <span class="cgrip"></span>
    <div class="cbox">
      <p>命令： _saveas</p>
      <div class="cline">
        <label for="cmd">命令：</label>
        <input id="cmd" bind:value={command} />
        <div class="scroll horiz small">
          <button aria-label="命令向左滚动">{@render chevron('left')}</button>
          <span class="thumb"></span>
          <button aria-label="命令向右滚动">{@render chevron('right')}</button>
        </div>
      </div>
    </div>
    <div class="cspin"><i></i><i></i></div>
  </section>

  <footer class="status">“样式” 工具栏</footer>

  <div class="taskbar">
    <button class="start">
      <svg width="20" height="20" viewBox="0 0 20 20" aria-hidden="true">
        <path d="M4 3c2-1 4-1 6 0L8.500 9c-2-1-4-1-6 0z" fill="#e8582a" /><path d="M11 3.500c2 1 4 1 6.500 0L16 9.500c-2 1-4 1-6.500 0z" fill="#8fd13b" />
        <path d="M2 10.500c2-1 4-1 6 0L6.500 16c-2-1-4-1-6 0z" fill="#4a8df2" /><path d="M9 11c2 1 4 1 6.500 0L14 17c-2 1-4 1-6.500 0z" fill="#f7cf35" />
      </svg>
      <em>开始</em>
    </button>
    <div class="quick">
      <button>网络<i></i></button>
      <button>工具<i></i></button>
      <button class="pic" aria-label="浏览器"><svg width="18" height="18"><path d="M3 4l8-2 5 2-1 11-8 2-4-3z" fill="#dbeefa" stroke="#2a5f98" /><path d="M6 9h6c0-5-6-5-6 0 0 4 5 4 6 1.500M12 4c4-2 4 1 2 3" fill="none" stroke="#1b66b8" stroke-width="1.7" /></svg></button>
      <button class="pic" aria-label="同步"><svg width="18" height="18"><path d="M2 11c1 4 4 4 5 1 2-5 5-7 9-9-5 0-9 3-11 8z" fill="#19b5e8" stroke="#0a5fb0" stroke-width=".8" /></svg></button>
      <span class="more">»</span>
    </div>
    <div class="tasks">
      <button class="on">{@render cadlogo(17)}<span>AutoCAD 2006 - [C:\...</span></button>
      <button><svg width="17" height="17"><path d="M1 4h6l1 2h7v9H1z" fill="#f6d878" stroke="#a47b1c" /><path d="M3 8h14l-3 7H1z" fill="#fcedac" stroke="#b58c2b" stroke-width=".8" /></svg><span>C:\Documents and Se...</span></button>
      <button><svg width="17" height="17"><path d="M1 1h14v14H1z" fill="#fff" /><path d="M2 2h12v12H2z" fill="#3c8fe0" /><path d="M2 10c4-5 8-5 12-2v6H2z" fill="#155c2c" /><path d="M2 5l7-2 5 3-7 1z" fill="#cfe9fb" /></svg><span>01.jpg - Windows 图...</span></button>
    </div>
    <svg class="kbd" width="18" height="16" viewBox="0 0 18 16" aria-hidden="true"><path d="M4 2l2 2 2-2 2 2 3-1v3" fill="none" stroke="#000" /><rect x="1.5" y="6.5" width="15" height="8" fill="#fff" stroke="#000" /><path d="M3 8.500h12M3 10.500h12" stroke="#000" stroke-dasharray="1 1" /><path d="M5 12.500h8" stroke="#000" /></svg>
    <div class="tray">
      <button class="hide" aria-label="隐藏图标">{@render chevron('left')}</button>
      <svg width="16" height="16" viewBox="0 0 16 16" aria-hidden="true"><circle cx="7" cy="8" r="6" fill="#71706f" stroke="#333" /><circle cx="6" cy="7" r="3.500" fill="#c5c3c0" stroke="#444" /><circle cx="6" cy="7" r="1.300" fill="#444" /><path d="M13 2c3 4 2 9-1 12" fill="none" stroke="#999" /></svg>
      <time>0:44</time>
    </div>
  </div>
</div>

<style>
  :global(body) { margin: 0; overflow: hidden; }
  .app { display: flex; flex-direction: column; height: 100vh; background: #ebe9ed; color: #000; font: 12px/16px "Liberation Sans", "Noto Sans CJK SC", sans-serif; overflow: hidden; }
  button { font: inherit; color: inherit; background: none; border: 0; padding: 0; display: flex; align-items: center; justify-content: center; flex: none; }
  svg { display: block; flex: none; }

  .title { display: flex; align-items: center; flex: none; height: 26px; padding: 0 2px; gap: 2px; box-sizing: border-box; background: linear-gradient(#4585d8 0, #74b9f2 4px, #69ade9 8px, #4286d6 15px, #2c63bd 20px, #2450a6 26px); }
  h1 { flex: 1; min-width: 0; margin: 0; font: bold 13px/20px "Liberation Mono", "Noto Sans CJK SC", monospace; color: #fff; text-shadow: 1px 1px 0 #17377c; white-space: pre; overflow: hidden; }
  .winbtns { display: flex; gap: 4px; }
  .winbtns button { width: 19px; height: 20px; border: 1px solid #a9c9f3; border-radius: 3px; box-sizing: border-box; background: linear-gradient(135deg, #7fb0ee, #2d62c0); }
  .winbtns .close { background: linear-gradient(135deg, #ee9a82, #c8391c); border-color: #f2c5b8; }

  .menu { display: flex; align-items: center; flex: none; height: 20px; padding-left: 3px; }
  .menu > button { width: 54px; justify-content: flex-start; white-space: nowrap; }
  .menu > button span { font: 10px/16px "Liberation Mono", monospace; }
  .menu .doc { margin-right: 5px; }
  .docbtns { display: flex; gap: 3px; margin-left: auto; padding-right: 2px; }
  .docbtns button { width: 16px; height: 16px; background: #f0eff2; border-right: 1px solid #ccc; border-bottom: 1px solid #ccc; box-sizing: border-box; }

  .bars { flex: none; border-bottom: 1px solid #8f8d96; }
  .row { display: flex; gap: 2px; height: 28px; overflow: hidden; }
  .toolbar { display: flex; align-items: center; flex: none; box-sizing: border-box; padding: 0 3px 0 0; border-top: 1px solid #fff; border-right: 1px solid #a3a1a8; border-bottom: 1px solid #a3a1a8; }
  .grip { flex: none; width: 7px; height: 24px; margin: 0 3px 0 2px; box-sizing: border-box; border: solid #b5b3bb; border-width: 0 1px; background: linear-gradient(90deg, #fff 2px, #b5b3bb 2px, #b5b3bb 3px, #fff 3px); }
  .tool { width: 23px; height: 22px; }
  .sep { flex: none; width: 6px; height: 22px; box-sizing: border-box; background: linear-gradient(90deg, transparent 2px, #d2d0d7 2px, #d2d0d7 3px, #fff 3px, #fff 4px, transparent 4px); }
  .drop { width: 13px; height: 22px; }
  .drop i { border: 3px solid transparent; border-top: 3px solid #000; border-bottom: 0; }
  .drop.faded i { border-top-color: #b5b3bb; }

  .combo { display: flex; align-items: center; flex: none; height: 22px; box-sizing: border-box; border: 1px solid #8fa6bd; background: #fff; }
  .combo select { flex: 1; min-width: 0; height: 20px; appearance: none; border: 0; margin: 0; padding: 0 4px; background: none; color: #000; font: 10px/20px "Liberation Mono", "Noto Sans CJK SC", monospace; outline: 0; }
  .lead { display: flex; align-items: center; padding-left: 4px; }
  .square { width: 9px; height: 9px; border: 1px solid #000; margin: 0 1px; }
  .rule { height: 1px; background: #000; }
  .arrow { display: flex; align-items: center; justify-content: center; width: 15px; height: 20px; background: linear-gradient(#dce9f8, #b5cdea); color: #435a80; box-shadow: inset 0 0 0 1px #c3d5ea; }
  .combo.off { background: #ebe9ed; border-color: #c5c9c5; }
  .combo.off select { color: #a5a3aa; font-size: 12px; padding-left: 8px; opacity: 1; }
  .off .arrow { opacity: .4; }

  main { flex: 1; min-height: 0; display: flex; gap: 1px; }
  .dock { flex: none; width: 25px; }
  .toolbar.vertical { flex-direction: column; padding: 0 0 4px; }
  .vertical .grip { width: 20px; height: 6px; margin: 2px 0 1px; border-width: 1px 0; background: linear-gradient(#fff 2px, #b5b3bb 2px, #b5b3bb 3px, #fff 3px); }
  .vertical .sep { width: 20px; height: 6px; background: linear-gradient(transparent 2px, #b5b3bb 2px, #b5b3bb 3px, #fff 3px, #fff 4px, transparent 4px); }
  .view { flex: 1; min-width: 0; display: grid; grid-template: minmax(0, 1fr) 15px / minmax(0, 1fr) 18px; border: solid #77757d; border-width: 1px 0 0 2px; margin-right: 1px; border-bottom: 1px solid #fff; }
  .canvas { width: 100%; height: 100%; background: #000; min-height: 0; }
  .labels { font: 11px "Liberation Sans", sans-serif; }
  .labels .axis { font-size: 14px; }

  .scroll { display: flex; background: linear-gradient(90deg, #e9f2fd, #fbfdff); }
  .scroll button, .thumb { width: 17px; height: 16px; box-sizing: border-box; border: 1px solid #8ea9cb; border-radius: 2px; background: linear-gradient(#e6f0fb, #b6cce9); color: #41557a; box-shadow: inset 0 0 0 1px #eef5fd; }
  .vert { flex-direction: column; align-items: center; justify-content: space-between; }
  .vert .thumb { background: repeating-linear-gradient(#8ba5c9 0 1px, #eef5fd 1px 2px) center / 7px 8px no-repeat, #cfdff3; }
  .foot { grid-column: 1 / 3; display: flex; height: 15px; }
  .horiz { margin-left: auto; width: 306px; margin-right: 18px; justify-content: space-between; background: linear-gradient(#e4effc, #fbfdff); }
  .horiz button, .horiz .thumb { height: 15px; }
  .horiz .thumb { margin: 0 auto; background: repeating-linear-gradient(90deg, #8ba5c9 0 1px, #eef5fd 1px 2px) center / 8px 7px no-repeat, #cfdff3; }
  .split { width: 5px; margin-right: 1px; background: #fff; border: 1px solid #aaa; box-sizing: border-box; }
  .navs { display: flex; }
  .navs button { width: 18px; height: 14px; box-sizing: border-box; border-right: 1px solid #a3a1a8; border-bottom: 1px solid #a3a1a8; }
  .tabs { display: flex; padding-left: 2px; }
  .tabs button { display: grid; width: 42px; height: 14px; justify-content: center; }
  .tabs button > * { grid-area: 1 / 1; }
  .tabs span { z-index: 1; font-size: 12px; line-height: 13px; text-align: center; }
  .tabs .active { color: #fff; z-index: 1; width: 41px; }

  .command { flex: none; display: flex; height: 39px; box-sizing: border-box; margin-top: 4px; border-top: 1px solid #000; padding: 5px 8px 0 5px; border-bottom: 1px solid #f7f7fa; }
  .cgrip { width: 7px; height: 26px; margin: 3px 4px 0 0; border: solid #b5b3bb; border-width: 0 1px; box-sizing: border-box; background: linear-gradient(90deg, #fff 2px, #b5b3bb 2px, #b5b3bb 3px, #fff 3px); }
  .cbox { flex: 1; min-width: 0; border-top: 1px solid #000; border-left: 1px solid #000; background: #fff; height: 30px; font: 13px/14px "Liberation Mono", "Noto Sans CJK SC", monospace; }
  .cbox p { margin: 0; padding-left: 2px; height: 14px; border-bottom: 1px solid #a3a1a8; white-space: pre; }
  .cline { display: flex; height: 15px; padding-left: 2px; }
  .cline input { flex: 1; min-width: 0; border: 0; padding: 0; font: inherit; outline: 0; background: none; }
  .horiz.small { width: 66px; margin-right: 0; flex: none; }
  .horiz.small .thumb { margin: 0 auto 0 0; }
  .cspin { width: 16px; display: grid; gap: 1px; height: 14px; padding-top: 1px; }
  .cspin i { border: 1px solid #8ea9cb; background: linear-gradient(#f2f7fd, #b6cce9); }

  .status { flex: none; height: 23px; box-sizing: border-box; padding: 5px 11px 0; background: #eff1f7; border-top: 1px solid #a3a1a8; }

  .taskbar { flex: none; display: flex; align-items: center; height: 30px; box-sizing: border-box; border-top: 1px solid #2b4f9c; color: #fff; background: linear-gradient(#8cc0f2 0, #64a1e8 6px, #4583d8 14px, #3266c2 22px, #2853ad 30px); font: 11px/16px "DejaVu Sans Condensed", "Noto Sans CJK SC", sans-serif; }
  .start { width: 100px; height: 29px; justify-content: flex-start; gap: 6px; padding-left: 11px; border-radius: 0 10px 12px 0; background: linear-gradient(#7cc47b 0, #3f9c42 6px, #2c8c2e 18px, #2fae2c 29px); box-shadow: inset -2px 1px 2px #b3dfb0; box-sizing: border-box; }
  .start em { font-size: 19px; line-height: 24px; text-shadow: 1px 1px 1px #1d4d1d; }
  .quick { display: flex; align-items: center; gap: 7px; width: 159px; padding-left: 15px; flex: none; font-size: 12px; }
  .quick > button { gap: 7px; }
  .quick i { border: 4px solid transparent; border-top-color: #fff; border-bottom: 0; }
  .quick .pic { width: 17px; }
  .more { font-size: 14px; line-height: 12px; padding-bottom: 8px; }
  .tasks { display: flex; gap: 3px; flex: 1; min-width: 0; }
  .tasks button { width: 157px; height: 23px; gap: 3px; padding: 0 8px; justify-content: flex-start; box-sizing: border-box; border: 1px solid #3565b9; border-radius: 2px; background: linear-gradient(#6aa6e8, #4581d3 50%, #3467c1); white-space: nowrap; flex: 0 1 157px; overflow: hidden; }
  .tasks .on { background: linear-gradient(#1f4794, #28529f); border-color: #173a80; }
  .kbd { margin: 3px 20px 0 0; }
  .tray { display: flex; align-items: center; gap: 3px; height: 29px; padding-right: 17px; flex: none; background: linear-gradient(#d9eafa 0, #b3d1ef 8px, #8cb5e3 18px, #6c97d1 29px); color: #000; }
  .tray .hide { width: 16px; height: 16px; border-radius: 8px; background: #e9f1fa; color: #4a6a96; margin-left: -7px; }
  .tray time { margin-left: 8px; }
</style>
